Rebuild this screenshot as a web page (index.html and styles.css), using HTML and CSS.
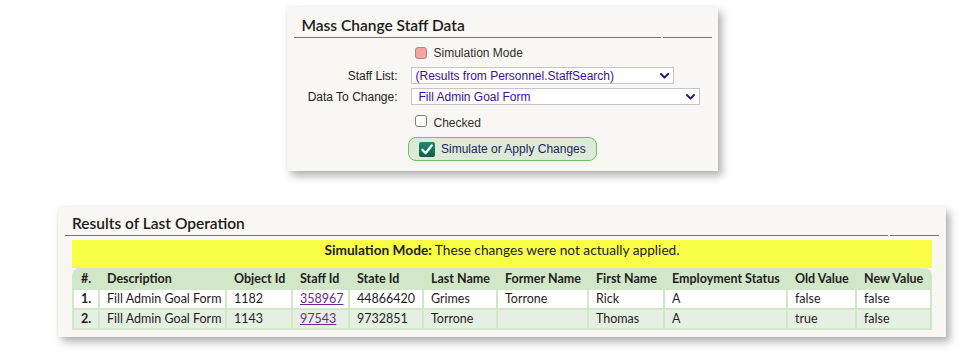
FILE: index.html
```html
<!DOCTYPE html>
<html>
<head>
<meta charset="utf-8">
<link rel="stylesheet" href="styles.css">
</head>
<body>
<div class="page">
  <section class="panel panel-form">
    <div class="panel-head head-form">
      <div class="head-main">Mass Change Staff Data</div>
      <div class="head-end"></div>
    </div>
    <div class="row row-sim">
      <span class="lbl"></span>
      <label class="chk"><span class="box box-pink"></span>Simulation Mode</label>
    </div>
    <div class="row row-staff">
      <span class="lbl">Staff List:</span>
      <div class="select sel-staff">
        <span>(Results from Personnel.StaffSearch)</span>
        <svg class="chev" width="9" height="6" viewBox="0 0 9 6"><path d="M1 1 L4.5 4.6 L8 1" fill="none" stroke="#2a1478" stroke-width="2" stroke-linecap="round" stroke-linejoin="round"/></svg>
      </div>
    </div>
    <div class="row row-data">
      <span class="lbl">Data To Change:</span>
      <div class="select sel-data">
        <span>Fill Admin Goal Form</span>
        <svg class="chev" width="9" height="6" viewBox="0 0 9 6"><path d="M1 1 L4.5 4.6 L8 1" fill="none" stroke="#2a1478" stroke-width="2" stroke-linecap="round" stroke-linejoin="round"/></svg>
      </div>
    </div>
    <div class="row row-checked">
      <span class="lbl"></span>
      <label class="chk chk-low"><span class="box"></span>Checked</label>
    </div>
    <div class="btn-row">
      <button class="btn" type="button">
        <svg class="btn-icon" width="16" height="15" viewBox="0 0 16 15">
          <defs>
            <linearGradient id="g" x1="0" y1="0" x2="0" y2="1">
              <stop offset="0" stop-color="#1f8a72"/>
              <stop offset="1" stop-color="#0c5e4c"/>
            </linearGradient>
          </defs>
          <rect x="0" y="0" width="16" height="15" rx="2" fill="url(#g)"/>
          <path d="M3.4 7.8 L6.6 11.2 L12.8 3.4" fill="none" stroke="#fff" stroke-width="2.3" stroke-linecap="round" stroke-linejoin="round"/>
        </svg>
        <span>Simulate or Apply Changes</span>
      </button>
    </div>
  </section>

  <section class="panel panel-results">
    <div class="panel-head head-results">
      <div class="head-main">Results of Last Operation</div>
      <div class="head-end"></div>
    </div>
    <div class="results-body">
      <div class="banner"><b>Simulation Mode:</b> These changes were not actually applied.</div>
      <table class="grid">
        <colgroup>
          <col style="width:24px"><col style="width:125px"><col style="width:64px"><col style="width:55px"><col style="width:72px"><col style="width:72px"><col style="width:89px"><col style="width:74px"><col style="width:121px"><col style="width:67px"><col style="width:73px">
        </colgroup>
        <thead>
          <tr><th>#.</th><th>Description</th><th>Object Id</th><th>Staff Id</th><th>State Id</th><th>Last Name</th><th>Former Name</th><th>First Name</th><th>Employment Status</th><th>Old Value</th><th>New Value</th></tr>
        </thead>
        <tbody>
          <tr class="odd"><td class="num">1.</td><td>Fill Admin Goal Form</td><td>1182</td><td><a href="#">358967</a></td><td>44866420</td><td>Grimes</td><td>Torrone</td><td>Rick</td><td>A</td><td>false</td><td>false</td></tr>
          <tr class="even"><td class="num">2.</td><td>Fill Admin Goal Form</td><td>1143</td><td><a href="#">97543</a></td><td>9732851</td><td>Torrone</td><td></td><td>Thomas</td><td>A</td><td>true</td><td>false</td></tr>
        </tbody>
      </table>
    </div>
  </section>
</div>
</body>
</html>
```

FILE: styles.css
```css
html, body {
  margin: 0;
  background: #ffffff;
}

body {
  min-height: 364px;
}

.page {
  display: flex;
  flex-direction: column;
  align-items: center;
  padding: 7px 0 0 31px;
}

.panel {
  background: #f8f7f3;
  box-shadow: 4px 5px 8px rgba(0, 0, 0, 0.3), 0 0 3px rgba(0, 0, 0, 0.06);
  box-sizing: border-box;
}

.panel-form {
  width: 431px;
  height: 164px;
  padding: 0 6px 0 7px;
}

.panel-results {
  width: 888px;
  height: 130px;
  margin-top: 36px;
  padding: 0 7px;
}

.panel-head {
  display: flex;
  gap: 2px;
}

.head-main {
  flex: 1;
  padding-left: 8px;
  font-family: "Lato", "Open Sans", sans-serif;
  font-weight: 600;
  font-size: 15.5px;
  color: #1b1b1b;
  border-bottom: 1px solid #777;
}

.head-end {
  width: 49px;
  border-bottom: 1px solid #777;
}

.head-form .head-main {
  padding-top: 6px;
  line-height: 24px;
}

.head-results .head-main {
  padding-top: 5px;
  line-height: 23px;
  padding-left: 7px;
}

/* form */
.row {
  display: grid;
  grid-template-columns: 104px auto;
  column-gap: 13px;
  align-items: center;
  height: 17px;
  font-family: "Liberation Sans", Arial, sans-serif;
  font-size: 12px;
  color: #222;
}

.row-sim { margin-top: 6px; }
.row-staff { margin-top: 6px; }
.row-data { margin-top: 4px; }
.row-checked { margin-top: 8px; }

.lbl {
  text-align: right;
}

.chk {
  display: flex;
  align-items: center;
  color: #2e2e2e;
}

.chk-low {
  padding-top: 2px;
}

.chk-low .box {
  margin-top: -3px;
}

.box {
  width: 12px;
  height: 12px;
  box-sizing: border-box;
  border: 1px solid #7d7d7d;
  border-radius: 3px;
  background: #fff;
  margin: 0 7px 0 4px;
}

.box-pink {
  background: #f4a4a4;
  border-color: #a88;
}

.select {
  height: 17px;
  box-sizing: border-box;
  border: 1px solid #c6c6c6;
  background: #fff;
  display: flex;
  align-items: center;
  justify-content: space-between;
  color: #3a109c;
  padding: 0 4px 0 4px;
}

.sel-staff { width: 263px; }
.sel-data { width: 289px; padding-left: 7px; }

.chev {
  display: block;
}

.btn-row {
  display: flex;
  justify-content: center;
  margin-top: 7px;
}

.btn {
  width: 189px;
  height: 24px;
  box-sizing: border-box;
  border: 1px solid #6fbf6f;
  border-radius: 8px;
  background: #dcebd8;
  display: flex;
  align-items: center;
  gap: 6px;
  padding: 0 0 0 10px;
  font-family: "Liberation Sans", Arial, sans-serif;
  font-size: 12px;
  color: #272060;
  cursor: pointer;
}

.btn-icon {
  display: block;
}

/* results */
.results-body {
  margin: 4px 7px 0;
}

.banner {
  height: 28px;
  box-sizing: border-box;
  background: #f9fd45;
  text-align: center;
  font-family: "Lato", "Open Sans", sans-serif;
  font-size: 13.7px;
  line-height: 17px;
  padding-top: 1px;
  color: #1e1e1e;
}

.grid {
  width: 860px;
  table-layout: fixed;
  border-collapse: separate;
  border-spacing: 2px;
  background: #d1e7c8;
  border-radius: 8px 8px 0 0;
  font-family: "Lato", "Open Sans", sans-serif;
  font-size: 12.5px;
  color: #1e1e1e;
}

.grid th,
.grid td {
  height: 18px;
  padding: 0 0 0 7px;
  line-height: 18px;
  text-align: left;
  white-space: nowrap;
  overflow: hidden;
}

.grid th {
  font-weight: 700;
}

.grid .num {
  font-weight: 700;
}

.odd td { background: #ffffff; }
.even td { background: #e5f0e2; }

.grid a {
  color: #6a2a90;
  text-decoration: underline;
}
```
